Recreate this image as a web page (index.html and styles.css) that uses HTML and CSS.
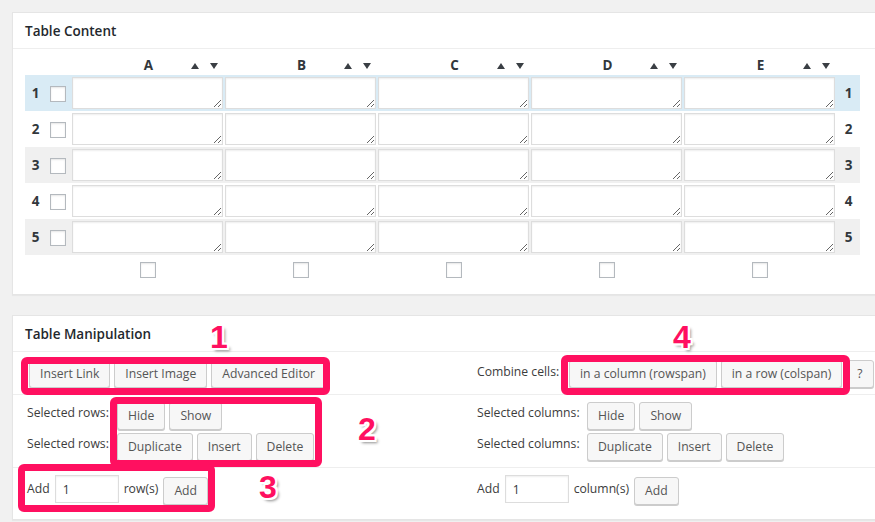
FILE: index.html
```html
<!DOCTYPE html>
<html lang="en">
<head>
<meta charset="utf-8">
<title>Table Editor</title>
<link rel="stylesheet" href="styles.css">
</head>
<body>
<div class="page">
  <section class="postbox content-box">
    <h2 class="hndle">Table Content</h2>
    <div class="inside">
      <div class="trow thead">
        <div class="c-num"></div><div class="c-chk"></div>
        <div class="c-head"><span class="letter">A</span><span class="sort"><i class="up"></i><i class="down"></i></span></div>
        <div class="c-head"><span class="letter">B</span><span class="sort"><i class="up"></i><i class="down"></i></span></div>
        <div class="c-head"><span class="letter">C</span><span class="sort"><i class="up"></i><i class="down"></i></span></div>
        <div class="c-head"><span class="letter">D</span><span class="sort"><i class="up"></i><i class="down"></i></span></div>
        <div class="c-head"><span class="letter">E</span><span class="sort"><i class="up"></i><i class="down"></i></span></div>
        <div class="c-num"></div>
      </div>
      <div class="trow selected">
        <div class="c-num">1</div><div class="c-chk"><input type="checkbox"></div>
        <div class="c-cell"><textarea></textarea></div><div class="c-cell"><textarea></textarea></div><div class="c-cell"><textarea></textarea></div><div class="c-cell"><textarea></textarea></div><div class="c-cell"><textarea></textarea></div>
        <div class="c-num">1</div>
      </div>
      <div class="trow">
        <div class="c-num">2</div><div class="c-chk"><input type="checkbox"></div>
        <div class="c-cell"><textarea></textarea></div><div class="c-cell"><textarea></textarea></div><div class="c-cell"><textarea></textarea></div><div class="c-cell"><textarea></textarea></div><div class="c-cell"><textarea></textarea></div>
        <div class="c-num">2</div>
      </div>
      <div class="trow striped">
        <div class="c-num">3</div><div class="c-chk"><input type="checkbox"></div>
        <div class="c-cell"><textarea></textarea></div><div class="c-cell"><textarea></textarea></div><div class="c-cell"><textarea></textarea></div><div class="c-cell"><textarea></textarea></div><div class="c-cell"><textarea></textarea></div>
        <div class="c-num">3</div>
      </div>
      <div class="trow">
        <div class="c-num">4</div><div class="c-chk"><input type="checkbox"></div>
        <div class="c-cell"><textarea></textarea></div><div class="c-cell"><textarea></textarea></div><div class="c-cell"><textarea></textarea></div><div class="c-cell"><textarea></textarea></div><div class="c-cell"><textarea></textarea></div>
        <div class="c-num">4</div>
      </div>
      <div class="trow striped">
        <div class="c-num">5</div><div class="c-chk"><input type="checkbox"></div>
        <div class="c-cell"><textarea></textarea></div><div class="c-cell"><textarea></textarea></div><div class="c-cell"><textarea></textarea></div><div class="c-cell"><textarea></textarea></div><div class="c-cell"><textarea></textarea></div>
        <div class="c-num">5</div>
      </div>
      <div class="trow tfoot">
        <div class="c-num"></div><div class="c-chk"></div>
        <div class="c-foot"><input type="checkbox"></div><div class="c-foot"><input type="checkbox"></div><div class="c-foot"><input type="checkbox"></div><div class="c-foot"><input type="checkbox"></div><div class="c-foot"><input type="checkbox"></div>
        <div class="c-num"></div>
      </div>
    </div>
  </section>

  <section class="postbox manip-box">
    <h2 class="hndle">Table Manipulation</h2>
    <div class="mrow row-a">
      <div class="mcell left">
        <div class="btns first-btns"><button>Insert Link</button><button>Insert Image</button><button>Advanced Editor</button></div>
      </div>
      <div class="mcell right">
        <span class="lbl lbl-combine">Combine cells:</span>
        <div class="btns"><button>in a column (rowspan)</button><button>in a row (colspan)</button><button>?</button></div>
      </div>
    </div>
    <div class="mrow row-b">
      <div class="mcell left stack">
        <div class="line"><span class="lbl lbl-rows">Selected rows:</span><div class="btns"><button>Hide</button><button>Show</button></div></div>
        <div class="line"><span class="lbl lbl-rows">Selected rows:</span><div class="btns"><button>Duplicate</button><button>Insert</button><button>Delete</button></div></div>
      </div>
      <div class="mcell right stack">
        <div class="line"><span class="lbl lbl-cols">Selected columns:</span><div class="btns"><button>Hide</button><button>Show</button></div></div>
        <div class="line"><span class="lbl lbl-cols">Selected columns:</span><div class="btns"><button>Duplicate</button><button>Insert</button><button>Delete</button></div></div>
      </div>
    </div>
    <div class="mrow row-c">
      <div class="mcell left">
        <div class="addline"><span class="txt">Add</span><input class="num-input" type="text" value="1"><span class="txt">row(s)</span><button class="add-btn">Add</button></div>
      </div>
      <div class="mcell right">
        <div class="addline"><span class="txt">Add</span><input class="num-input" type="text" value="1"><span class="txt">column(s)</span><button class="add-btn">Add</button></div>
      </div>
    </div>
  </section>

  <div class="mark box1"></div>
  <div class="mark box2"></div>
  <div class="mark box3"></div>
  <div class="mark box4"></div>
  <span class="callout n1">1</span>
  <span class="callout n2">2</span>
  <span class="callout n3">3</span>
  <span class="callout n4">4</span>
</div>
</body>
</html>
```
FILE: styles.css
```css
html, body {
  margin: 0;
  padding: 0;
  overflow: hidden;
  background: #f1f1f1;
}
body {
  font-family: "Open Sans", "Noto Sans", sans-serif;
  font-size: 12.2px;
  color: #444;
}
input[type="checkbox"] {
  appearance: none;
  -webkit-appearance: none;
  display: block;
  width: 16px;
  height: 16px;
  margin: 0;
  border: 1px solid #b4b9be;
  background: #fff;
  box-shadow: inset 0 1px 2px rgba(0, 0, 0, .1);
  box-sizing: border-box;
}
.page {
  position: relative;
  width: 875px;
  height: 522px;
  padding: 12px 0 0 12px;
  box-sizing: border-box;
}
.postbox {
  width: 900px;
  background: #fff;
  border: 1px solid #e5e5e5;
  box-shadow: 0 1px 1px rgba(0, 0, 0, .04);
  box-sizing: border-box;
}
.content-box {
  margin-bottom: 20px;
}
.hndle {
  margin: 0;
  height: 36px;
  padding: 0 12px;
  box-sizing: border-box;
  border-bottom: 1px solid #eee;
  font-size: 13.5px;
  font-weight: 600;
  line-height: 36px;
  color: #23282d;
}
.inside {
  padding: 0 0 16px 12px;
}
.trow {
  display: grid;
  grid-template-columns: 21px 26px repeat(5, 153px) 23px;
  width: 835px;
  height: 36px;
}
.trow.selected { background: #d9ebf5; }
.trow.striped { background: #f0f0f0; }
.trow.thead {
  height: 26px;
  padding-top: 6px;
  box-sizing: border-box;
}
.trow.tfoot {
  height: auto;
  padding-top: 7px;
}
.c-num {
  text-align: center;
  line-height: 37px;
  font-weight: 700;
  font-size: 13.5px;
  color: #32373c;
}
.c-chk {
  padding-left: 4px;
}
.c-chk input[type="checkbox"] {
  margin-top: 11px;
}
.c-head {
  display: grid;
  grid-template-columns: 1fr auto 1fr;
  align-items: center;
  line-height: 18px;
}
.letter {
  grid-column: 2;
  font-weight: 700;
  font-size: 13.5px;
  color: #32373c;
}
.sort {
  grid-column: 3;
  justify-self: end;
  display: flex;
  gap: 11px;
  margin-right: 7px;
  margin-top: 1px;
}
.sort i {
  display: block;
  width: 0;
  height: 0;
  border-left: 4px solid transparent;
  border-right: 4px solid transparent;
}
.sort .up { border-bottom: 6px solid #3a3f44; }
.sort .down { border-top: 6px solid #3a3f44; }
.c-cell textarea {
  display: block;
  width: 151px;
  height: 32px;
  margin: 2px 0 0 0;
  padding: 2px 4px;
  box-sizing: border-box;
  border: 1px solid #ddd;
  box-shadow: inset 0 1px 2px rgba(0, 0, 0, .07);
  background: #fff;
  font: inherit;
  resize: both;
  outline: none;
}
.c-foot {
  display: flex;
  justify-content: center;
  padding-right: 2px;
}

/* manipulation */
.mrow {
  display: grid;
  grid-template-columns: 452px 1fr;
  border-bottom: 1px solid #eee;
  box-sizing: border-box;
}
.row-a { height: 43px; padding-top: 8px; }
.row-b { height: 73px; padding-top: 7px; }
.row-c { height: 51px; padding-top: 7px; border-bottom: 0; }
.mcell.left { padding-left: 14px; }
.mcell.right { padding-left: 12px; display: flex; align-items: flex-start; }
.mcell.stack { display: flex; flex-direction: column; gap: 3px; }
.line { display: flex; align-items: flex-start; }
.lbl {
  flex: none;
  line-height: 22px;
  color: #3c3c3c;
}
.lbl-combine { width: 92px; line-height: 24px; }
.lbl-rows { width: 90px; }
.lbl-cols { width: 110px; }
.btns { display: flex; gap: 4px; }
.first-btns { margin-left: 2px; }
button {
  height: 28px;
  margin: 0;
  padding: 0 10px 1px;
  border: 1px solid #ccc;
  border-radius: 3px;
  background: #f7f7f7;
  box-shadow: 0 1px 0 #ccc;
  color: #555;
  font-family: inherit;
  font-size: 12.2px;
  line-height: 26px;
  white-space: nowrap;
  box-sizing: border-box;
  cursor: pointer;
}
.addline {
  display: flex;
  align-items: flex-start;
  gap: 5px;
}
.txt { line-height: 28px; color: #3c3c3c; }
.num-input {
  width: 64px;
  height: 28px;
  margin: 0;
  padding: 0 7px;
  border: 1px solid #ddd;
  box-shadow: inset 0 1px 2px rgba(0, 0, 0, .07);
  background: #fff;
  box-sizing: border-box;
  font: inherit;
  color: #32373c;
}
.add-btn { margin-top: 2px; }

/* annotations overlaid on the screenshot */
.mark {
  position: absolute;
  border: 7px solid #ff1060;
  border-radius: 6px;
  box-sizing: border-box;
}
.box1 { left: 21px; top: 357px; width: 309px; height: 38px; }
.box2 { left: 110px; top: 397px; width: 212px; height: 70px; }
.box3 { left: 18px; top: 464px; width: 197px; height: 48px; }
.box4 { left: 561px; top: 355px; width: 289px; height: 40px; }
.callout {
  position: absolute;
  width: 30px;
  text-align: center;
  font-family: "Liberation Sans", Arial, sans-serif;
  font-weight: 700;
  font-size: 32px;
  line-height: 32px;
  color: #ff1060;
  text-shadow:
    -2px -2px 0 #fff, 2px -2px 0 #fff, -2px 2px 0 #fff, 2px 2px 0 #fff,
    0 -2px 0 #fff, 0 2px 0 #fff, -2px 0 0 #fff, 2px 0 0 #fff,
    3px 3px 3px rgba(0, 0, 0, .45);
}
.n1 { left: 204px; top: 321px; }
.n2 { left: 352px; top: 413px; }
.n3 { left: 253px; top: 471px; }
.n4 { left: 667px; top: 321px; }
```
